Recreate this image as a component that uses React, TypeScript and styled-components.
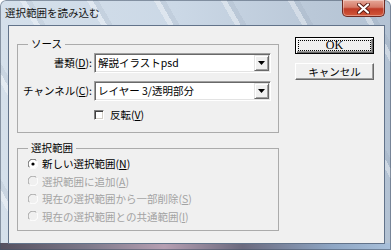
import React from "react";
import styled, { createGlobalStyle } from "styled-components";

const GlobalStyle = createGlobalStyle`
  html, body { margin: 0; padding: 0; }
  body {
    font-family: "Noto Sans CJK JP", "Noto Sans", sans-serif;
    font-size: 10.5px;
    color: #000;
  }
`;

const Window = styled.div`
  width: 391px;
  height: 250px;
  box-sizing: border-box;
  display: flex;
  flex-direction: column;
  border-radius: 6px 6px 0 0;
  overflow: hidden;
  box-shadow: inset 0 0 0 1px rgba(70, 84, 104, 0.55);
  background:
    linear-gradient(90deg, #55505f 0%, #7c7889 22%, #b69fb2 42%, #6b6a7e 62%, #8ea6c4 85%, #a9c0da 100%) bottom / 100% 7px no-repeat,
    repeating-linear-gradient(60deg, rgba(255, 255, 255, 0) 0 26px, rgba(255, 255, 255, 0.35) 26px 31px, rgba(120, 135, 155, 0.12) 31px 36px, rgba(255, 255, 255, 0) 36px 58px),
    linear-gradient(90deg, #d5e0eb 0%, #cbd8e6 45%, #bac8d8 80%, #b3c2d3 100%);
`;

const TitleBar = styled.div`
  height: 25px;
  flex: none;
  display: flex;
  align-items: flex-start;
  padding: 0 6px 0 5px;
`;

const Title = styled.span`
  font-size: 10.5px;
  line-height: 25px;
  color: #141414;
`;

const CloseButton = styled.div`
  margin-left: auto;
  width: 43px;
  height: 17px;
  box-sizing: border-box;
  border: 1px solid #6e2a22;
  border-top: none;
  border-radius: 0 0 5px 5px;
  background: linear-gradient(180deg, #e6a798 0%, #d57a68 45%, #bf3b27 55%, #d2583a 100%);
  box-shadow: inset 0 0 0 1px rgba(255, 255, 255, 0.35);
  display: flex;
  align-items: center;
  justify-content: center;
`;

const Body = styled.div`
  flex: 1;
  display: flex;
  padding: 0 6px 6px 8px;
`;

const Client = styled.div`
  flex: 1;
  display: flex;
  gap: 16px;
  padding: 11px 0 0 8px;
  background: #f0f0f0;
  border: 1px solid #62738a;
`;

const LeftColumn = styled.div`
  width: 262px;
  display: flex;
  flex-direction: column;
  gap: 8px;
`;

const ButtonColumn = styled.div`
  width: 79px;
  display: flex;
  flex-direction: column;
  gap: 9px;
`;

const Group = styled.fieldset<{ $pad: string }>`
  margin: 0;
  padding: ${(p) => p.$pad};
  border: 1px solid #ababab;
  min-width: 0;
`;

const Legend = styled.legend`
  margin-left: 10px;
  padding: 0 3px;
  font-size: 10.5px;
  line-height: 14px;
`;

const FormGrid = styled.div`
  display: grid;
  grid-template-columns: 74px 177px;
  column-gap: 2px;
  grid-template-rows: 20px 20px 12px;
  row-gap: 8px;
  margin-top: 2px;
`;

const FieldLabel = styled.label`
  text-align: right;
  line-height: 20px;
  white-space: nowrap;
`;

const Key = styled.span`
  text-decoration: underline;
  text-underline-offset: 1px;
`;

const Combo = styled.div`
  height: 20px;
  box-sizing: border-box;
  display: flex;
  align-items: center;
  background: #fff;
  border: 1px solid;
  border-color: #a0a0a0 #fff #fff #a0a0a0;
  box-shadow: inset 1px 1px #696969, inset -1px -1px #e3e3e3;
  padding: 1px;
`;

const ComboText = styled.span`
  flex: 1;
  padding-left: 2px;
  line-height: 16px;
  white-space: nowrap;
`;

const DropButton = styled.span`
  width: 15px;
  height: 16px;
  box-sizing: border-box;
  background: #f0f0f0;
  border: 1px solid;
  border-color: #e3e3e3 #696969 #696969 #e3e3e3;
  box-shadow: inset 1px 1px #fff, inset -1px -1px #a0a0a0;
  display: flex;
  align-items: center;
  justify-content: center;
`;

const CheckRow = styled.div`
  grid-column: 2;
  display: flex;
  align-items: center;
  gap: 6px;
  line-height: 12px;
`;

const CheckBox = styled.span`
  width: 10px;
  height: 10px;
  box-sizing: border-box;
  background: #fff;
  border: 1px solid;
  border-color: #808080 #fff #fff #808080;
  box-shadow: inset 1px 1px #404040, inset -1px -1px #d4d0c8;
`;

const RadioList = styled.div`
  display: flex;
  flex-direction: column;
`;

const RadioRow = styled.div<{ $disabled?: boolean }>`
  height: 17.5px;
  display: flex;
  align-items: center;
  gap: 4px;
  padding-left: 10px;
  white-space: nowrap;
  color: ${(p) => (p.$disabled ? "#a3a3a3" : "#000")};
`;

const DefaultButton = styled.button`
  width: 79px;
  height: 17px;
  padding: 0;
  box-sizing: border-box;
  border: 1px solid #000;
  background: #f0f0f0;
  box-shadow: inset 1px 1px #fff, inset -1px -1px #696969, inset -2px -2px #a0a0a0;
  outline: 1px dotted #000;
  outline-offset: -4px;
  font-family: "Liberation Serif", serif;
  font-size: 12px;
  line-height: 15px;
  color: #000;
`;

const PushButton = styled.button`
  width: 79px;
  height: 17px;
  padding: 0;
  box-sizing: border-box;
  border: 1px solid;
  border-color: #fff #696969 #696969 #fff;
  background: #f0f0f0;
  box-shadow: inset -1px -1px #a0a0a0;
  font-family: "Noto Sans CJK JP", sans-serif;
  font-size: 10.5px;
  line-height: 15px;
  color: #000;
`;

const Arrow = () => (
  <svg width="7" height="4" viewBox="0 0 7 4">
    <polygon points="0,0 7,0 3.5,4" fill="#000" />
  </svg>
);

const RadioIcon = ({ checked, disabled }: { checked?: boolean; disabled?: boolean }) => (
  <svg width="10" height="10" viewBox="0 0 10 10">
    <circle cx="5" cy="5" r="4.2" fill={disabled ? "#f0f0f0" : "#fff"} />
    <path d="M1.5 8.5 A4.95 4.95 0 0 1 8.5 1.5" stroke={disabled ? "#a0a0a0" : "#606060"} strokeWidth="1" fill="none" />
    <path d="M8.5 1.5 A4.95 4.95 0 0 1 1.5 8.5" stroke="#fff" strokeWidth="1" fill="none" />
    {checked && <circle cx="5" cy="5" r="1.6" fill="#000" />}
  </svg>
);

const CloseGlyph = () => (
  <svg width="13" height="11" viewBox="0 0 13 11">
    <path d="M2 1.5 L11 9.5 M11 1.5 L2 9.5" stroke="#5a1c14" strokeWidth="4" strokeLinecap="round" />
    <path d="M2 1.5 L11 9.5 M11 1.5 L2 9.5" stroke="#fff" strokeWidth="2.2" strokeLinecap="round" />
  </svg>
);

const radios = [
  { label: "新しい選択範囲", key: "N", checked: true, disabled: false },
  { label: "選択範囲に追加", key: "A", checked: false, disabled: true },
  { label: "現在の選択範囲から一部削除", key: "S", checked: false, disabled: true },
  { label: "現在の選択範囲との共通範囲", key: "I", checked: false, disabled: true },
];

const App: React.FC = () => {
  return (
    <>
      <GlobalStyle />
      <Window>
        <TitleBar>
          <Title>選択範囲を読み込む</Title>
          <CloseButton>
            <CloseGlyph />
          </CloseButton>
        </TitleBar>
        <Body>
          <Client>
            <LeftColumn>
              <Group $pad="0 0 11px 0">
                <Legend>ソース</Legend>
                <FormGrid>
                  <FieldLabel>
                    書類(<Key>D</Key>):
                  </FieldLabel>
                  <Combo>
                    <ComboText>解説イラストpsd</ComboText>
                    <DropButton>
                      <Arrow />
                    </DropButton>
                  </Combo>
                  <FieldLabel>
                    チャンネル(<Key>C</Key>):
                  </FieldLabel>
                  <Combo>
                    <ComboText>レイヤー 3/透明部分</ComboText>
                    <DropButton>
                      <Arrow />
                    </DropButton>
                  </Combo>
                  <CheckRow>
                    <CheckBox />
                    <span>
                      反転(<Key>V</Key>)
                    </span>
                  </CheckRow>
                </FormGrid>
              </Group>
              <Group $pad="0 0 5px 0">
                <Legend>選択範囲</Legend>
                <RadioList>
                  {radios.map((r) => (
                    <RadioRow key={r.key} $disabled={r.disabled}>
                      <RadioIcon checked={r.checked} disabled={r.disabled} />
                      <span>
                        {r.label}(<Key>{r.key}</Key>)
                      </span>
                    </RadioRow>
                  ))}
                </RadioList>
              </Group>
            </LeftColumn>
            <ButtonColumn>
              <DefaultButton>OK</DefaultButton>
              <PushButton>キャンセル</PushButton>
            </ButtonColumn>
          </Client>
        </Body>
      </Window>
    </>
  );
};

export default App;
